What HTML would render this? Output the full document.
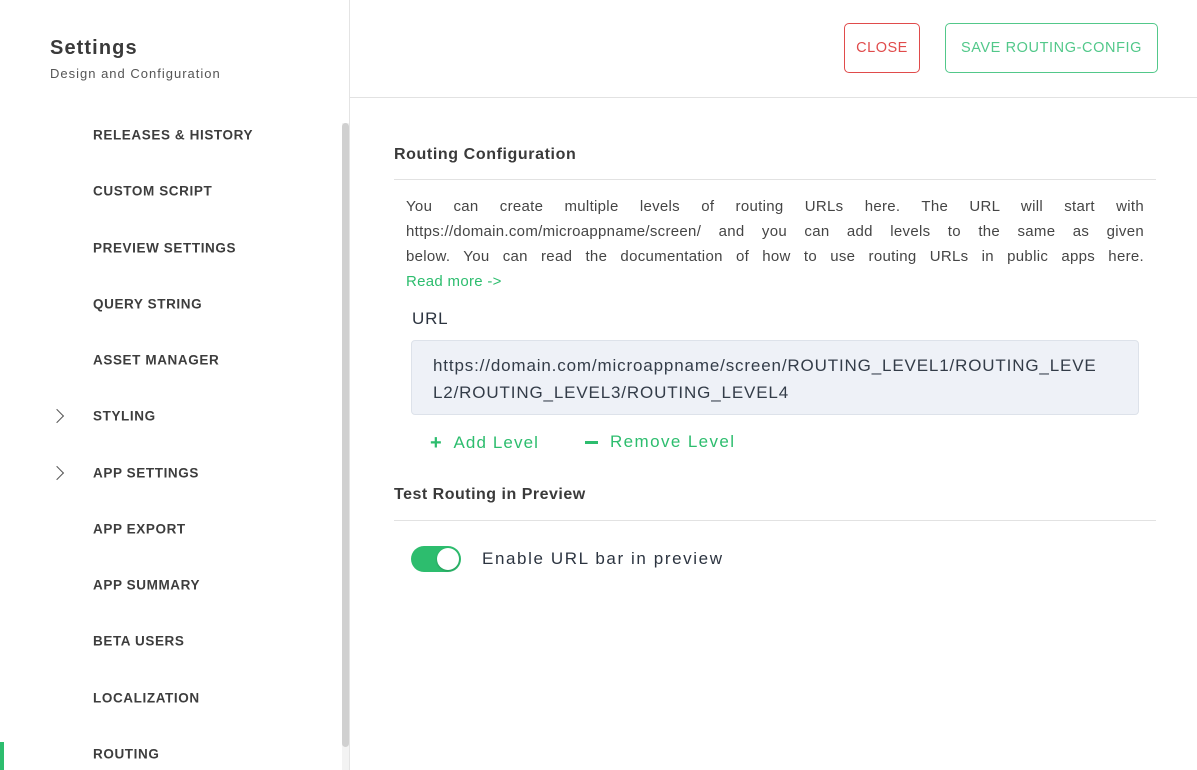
<!DOCTYPE html>
<html><head><style>
*{margin:0;padding:0;box-sizing:border-box}
body{width:1197px;height:770px;overflow:hidden;background:#fff;font-family:"Liberation Sans",sans-serif;color:#3a3a3a;position:relative}
.abs{position:absolute;white-space:nowrap}
.side{position:absolute;left:0;top:0;width:350px;height:770px;border-right:1px solid #e4e4e4}
.nav{position:absolute;left:93px;font-size:13.5px;font-weight:bold;letter-spacing:0.6px;color:#3d3d3d;transform:translateY(-50%)}
.chev{position:absolute;left:52px;width:10px;height:10px;border-right:1.6px solid #555;border-top:1.6px solid #555;transform:translateY(-50%) rotate(45deg)}
.para div{text-align:justify;text-align-last:justify;width:738px;height:25px;line-height:25px;font-size:15px;color:#454545;letter-spacing:0.3px}
</style></head><body>
<div class="side">
  <div class="abs" style="left:50px;top:37px;font-size:20px;font-weight:bold;color:#3a3a3a;letter-spacing:1.1px">Settings</div>
  <div class="abs" style="left:50px;top:66px;font-size:13px;color:#555;letter-spacing:1px">Design and Configuration</div>
  <div style="position:absolute;left:342px;top:123px;width:7px;height:647px;background:#f3f3f3"></div>
  <div style="position:absolute;left:342px;top:123px;width:7px;height:624px;background:#d0d0d0;border-radius:4px"></div>
  <div class="nav" style="top:135px">RELEASES &amp; HISTORY</div>
  <div class="nav" style="top:191px">CUSTOM SCRIPT</div>
  <div class="nav" style="top:248px">PREVIEW SETTINGS</div>
  <div class="nav" style="top:304px">QUERY STRING</div>
  <div class="nav" style="top:360px">ASSET MANAGER</div>
  <div class="chev" style="top:416px"></div>
  <div class="nav" style="top:416px">STYLING</div>
  <div class="chev" style="top:473px"></div>
  <div class="nav" style="top:473px">APP SETTINGS</div>
  <div class="nav" style="top:529px">APP EXPORT</div>
  <div class="nav" style="top:585px">APP SUMMARY</div>
  <div class="nav" style="top:641px">BETA USERS</div>
  <div class="nav" style="top:698px">LOCALIZATION</div>
  <div class="nav" style="top:754px">ROUTING</div>
  <div style="position:absolute;left:0;top:742px;width:4px;height:28px;background:#2dbd6e"></div>
</div>
<div style="position:absolute;left:350px;top:97px;width:847px;height:1px;background:#e2e2e2"></div>
<div class="abs" style="left:844px;top:23px;width:76px;height:50px;border:1px solid #e04b4b;border-radius:5px;color:#e04b4b;font-size:14.5px;line-height:48px;text-align:center;letter-spacing:0.5px">CLOSE</div>
<div class="abs" style="left:945px;top:23px;width:213px;height:50px;border:1px solid #52c88a;border-radius:5px;color:#52c88a;font-size:14.5px;line-height:48px;text-align:center;letter-spacing:0.6px">SAVE ROUTING-CONFIG</div>

<div class="abs" style="left:394px;top:146px;font-size:16px;font-weight:bold;color:#3a3a3a;letter-spacing:0.6px">Routing Configuration</div>
<div style="position:absolute;left:394px;top:179px;width:762px;height:1px;background:#e2e2e2"></div>
<div class="para" style="position:absolute;left:406px;top:194px">
  <div>You can create multiple levels of routing URLs here. The URL will start with</div>
  <div>https://domain.com/microappname/screen/ and you can add levels to the same as given</div>
  <div>below. You can read the documentation of how to use routing URLs in public apps here.</div>
  <div style="text-align-last:left;color:#2dbd6e">Read more -&gt;</div>
</div>
<div class="abs" style="left:412px;top:309px;font-size:17px;color:#2c3440;letter-spacing:0.8px">URL</div>
<div style="position:absolute;left:411px;top:340px;width:728px;height:75px;background:#eef1f7;border:1px solid #dde2ea;border-radius:4px;padding:11px 0 0 21px;font-size:17px;line-height:27px;color:#333c48;letter-spacing:0.85px;white-space:nowrap">https://domain.com/microappname/screen/ROUTING_LEVEL1/ROUTING_LEVE<br>L2/ROUTING_LEVEL3/ROUTING_LEVEL4</div>
<div class="abs" style="left:430px;top:432px;font-size:17px;color:#2dbd6e;letter-spacing:1.1px"><b style="font-size:20px;line-height:20px;position:relative;top:1px">+</b>&nbsp; Add Level</div>
<div style="position:absolute;left:585px;top:441px;width:13px;height:3px;background:#2dbd6e"></div>
<div class="abs" style="left:610px;top:432px;font-size:17px;color:#2dbd6e;letter-spacing:1.4px">Remove Level</div>

<div class="abs" style="left:394px;top:486px;font-size:16px;font-weight:bold;color:#3a3a3a;letter-spacing:0.5px">Test Routing in Preview</div>
<div style="position:absolute;left:394px;top:520px;width:762px;height:1px;background:#e2e2e2"></div>
<div style="position:absolute;left:411px;top:546px;width:50px;height:26px;border-radius:13px;background:#2dbd6e"></div>
<div style="position:absolute;left:437px;top:548px;width:22px;height:22px;border-radius:50%;background:#fff;box-shadow:0 1px 2px rgba(0,0,0,.2)"></div>
<div class="abs" style="left:482px;top:549px;font-size:17px;color:#2c3440;letter-spacing:1.6px">Enable URL bar in preview</div>
</body></html>
